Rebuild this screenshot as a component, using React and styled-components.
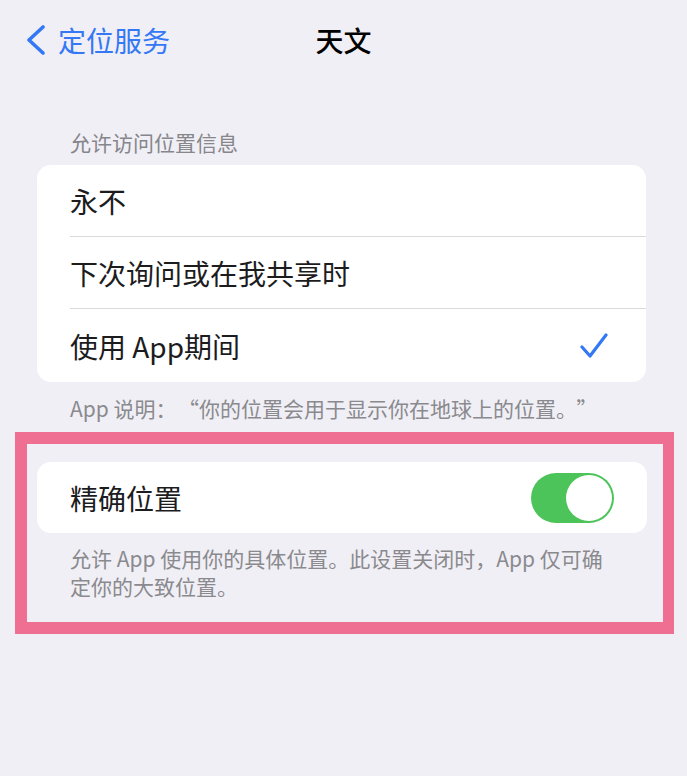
import React from 'react'
import styled, { createGlobalStyle } from 'styled-components';

const Global = createGlobalStyle`
body {
  margin: 0;
  background: #f0eff5;
  font-family: "Noto Sans CJK SC", "Noto Sans", sans-serif;
}
`

const Page = styled.div`
width: 687px;
min-height: 776px;
background: #f0eff5;
`

const Nav = styled.div`
position: relative;
height: 80px;
display: flex;
align-items: center;
`

const Back = styled.div`
display: flex;
align-items: center;
gap: 12px;
padding-left: 26px;
color: #3478f6;
font-size: 28px;
`

const Title = styled.div`
position: absolute;
left: 0;
right: 0;
text-align: center;
font-size: 28px;
font-weight: 500;
color: #000;
pointer-events: none;
`

const Header = styled.div`
margin: 48px 0 9px 70px;
font-size: 21px;
line-height: 28px;
color: #86868b;
`

const Card = styled.div`
margin: 0 ${p => p.$right || 41}px 0 ${p => p.$left || 37}px;
background: #fff;
border-radius: 14px;
overflow: hidden;
`

const Row = styled.div`
height: ${p => p.$h || 72}px;
display: flex;
align-items: center;
justify-content: space-between;
padding: 0 ${p => p.$pr || 38}px 0 33px;
font-size: 28px;
color: #1c1c1e;
position: relative;
${p => p.$line && `
  &::after {
    content: '';
    position: absolute;
    left: 33px;
    right: 0;
    bottom: 0;
    height: 1px;
    background: #d9d9de;
  }
`}
`

const Footer = styled.div`
margin: ${p => p.$top || 12}px 0 0 ${p => p.$left || 70}px;
width: 545px;
font-size: 21px;
line-height: 28px;
color: #8a8a8e;
`

const Quote = styled.span`
margin-left: ${p => p.$gap}px;
`

const Frame = styled.div`
box-sizing: border-box;
margin: 10px 0 0 15px;
width: 659px;
border: 12px solid #ef6f92;
border-right-width: 11px;
padding: 18px 0 22px 0;
`

const Toggle = styled.div`
width: 83px;
height: 50px;
border-radius: 25px;
background: #4cc459;
display: flex;
align-items: center;
justify-content: flex-end;
padding: 0 2px;
box-sizing: border-box;
`

const Knob = styled.div`
width: 46px;
height: 46px;
border-radius: 50%;
background: #fff;
`

const Chevron = () => (
  <svg width="20" height="30" viewBox="0 0 20 30">
    <polyline points="17,2 3,15 17,28" fill="none" stroke="#3478f6" strokeWidth="3.6" strokeLinecap="round" strokeLinejoin="round" />
  </svg>
)

const Check = () => (
  <svg width="28" height="26" viewBox="0 0 28 26">
    <polyline points="2,14 10,23 26,2" fill="none" stroke="#3478f6" strokeWidth="3.2" strokeLinecap="round" strokeLinejoin="round" />
  </svg>
)

const App = () => {
  return (
    <Page>
      <Global />
      <Nav>
        <Back>
          <Chevron />
          <span>定位服务</span>
        </Back>
        <Title>天文</Title>
      </Nav>
      <Header>允许访问位置信息</Header>
      <Card>
        <Row $line>永不</Row>
        <Row $line>下次询问或在我共享时</Row>
        <Row $h={73}>
          <span>使用 App期间</span>
          <Check />
        </Row>
      </Card>
      <Footer>App 说明：<Quote $gap={12}>“</Quote>你的位置会用于显示你在地球上的位置。<Quote $gap={10}>”</Quote></Footer>
      <Frame>
        <Card $left={10} $right={16}>
          <Row $h={71} $pr={33}>
            <span>精确位置</span>
            <Toggle><Knob /></Toggle>
          </Row>
        </Card>
        <Footer $top={11} $left={43}>允许 App 使用你的具体位置。此设置关闭时，App 仅可确定你的大致位置。</Footer>
      </Frame>
    </Page>
  );
};

export default App;
